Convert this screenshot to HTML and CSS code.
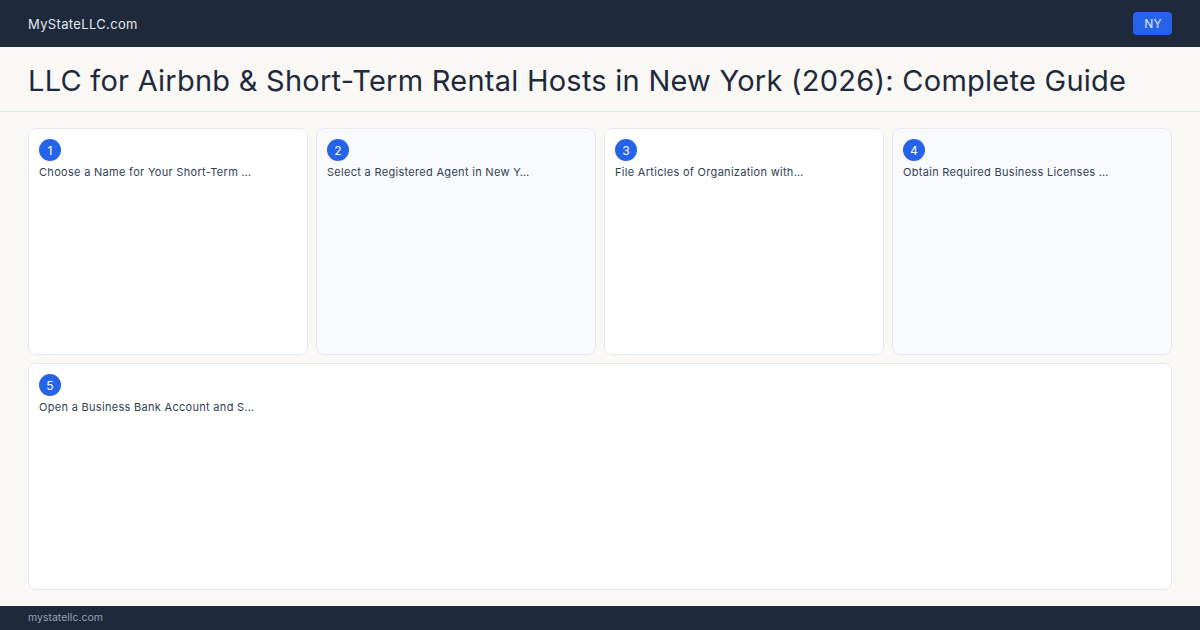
FILE: index.html
```html
<!DOCTYPE html>
<html lang="en">
<head>
  <meta charset="UTF-8">
  <meta name="viewport" content="width=device-width, initial-scale=1.0">
  <title>LLC for Airbnb &amp; Short-Term Rental Hosts in New York (2026)</title>
  <link rel="stylesheet" href="styles.css">
</head>
<body>
  <div class="page">
    <!-- Top bar -->
    <header class="topbar">
      <span class="brand">MyStateLLC.com</span>
      <span class="state-tag">NY</span>
    </header>

    <!-- Title -->
    <div class="title-bar">
      <h1>LLC for Airbnb &amp; Short-Term Rental Hosts in New York (2026): Complete Guide</h1>
    </div>

    <!-- Steps -->
    <main class="steps">
      <div class="step">
        <span class="step-num">1</span>
        <p>Choose a Name for Your Short-Term …</p>
      </div>
      <div class="step alt">
        <span class="step-num">2</span>
        <p>Select a Registered Agent in New Y…</p>
      </div>
      <div class="step">
        <span class="step-num">3</span>
        <p>File Articles of Organization with…</p>
      </div>
      <div class="step alt">
        <span class="step-num">4</span>
        <p>Obtain Required Business Licenses …</p>
      </div>
      <div class="step wide">
        <span class="step-num">5</span>
        <p>Open a Business Bank Account and S…</p>
      </div>
    </main>

    <footer class="footer">mystatellc.com</footer>
  </div>
</body>
</html>
```

FILE: styles.css
```css
body {
  margin: 0;
  padding: 0;
  background-color: #f9f8f5;
  font-family: Inter, "Noto Sans", sans-serif;
}

.page {
  height: 630px;
  display: flex;
  flex-direction: column;
}

.topbar {
  height: 47px;
  background-color: #1e293b;
  display: flex;
  justify-content: space-between;
  align-items: center;
  padding: 0 28px;
}

.brand {
  color: #e2e8f0;
  font-size: 13px;
  letter-spacing: 0.35px;
}

.state-tag {
  background-color: #2563eb;
  color: #e0e7ff;
  font-size: 12px;
  padding: 0 10px 0 11px;
  height: 23px;
  line-height: 23px;
  border-radius: 4px;
  letter-spacing: 0.3px;
}

.title-bar {
  height: 65px;
  display: flex;
  align-items: center;
  padding: 3px 28px 0;
  box-sizing: border-box;
  border-bottom: 1px solid #e2e8f0;
}

.title-bar h1 {
  margin: 0;
  font-size: 29px;
  font-weight: 400;
  letter-spacing: 0.25px;
  color: #1e293b;
  white-space: nowrap;
}

.steps {
  flex: 1;
  display: grid;
  grid-template-columns: repeat(4, 1fr);
  grid-auto-rows: 1fr;
  gap: 8px;
  padding: 16px 28px 16px;
}

.step {
  background-color: #ffffff;
  border: 1px solid #e2e8f0;
  border-radius: 8px;
  padding: 10px;
}

.step.alt {
  background-color: #f8fafc;
}

.step.wide {
  grid-column: 1 / -1;
}

.step-num {
  display: flex;
  justify-content: center;
  align-items: center;
  width: 22px;
  height: 22px;
  border-radius: 50%;
  background-color: #2563eb;
  color: #ffffff;
  font-size: 12px;
}

.step p {
  margin: 3px 0 0;
  font-size: 11px;
  line-height: 16px;
  letter-spacing: 0.3px;
  color: #334155;
}

.footer {
  height: 24px;
  background-color: #1e293b;
  color: #94a3b8;
  font-size: 10.5px;
  line-height: 24px;
  padding: 0 28px;
}
```
